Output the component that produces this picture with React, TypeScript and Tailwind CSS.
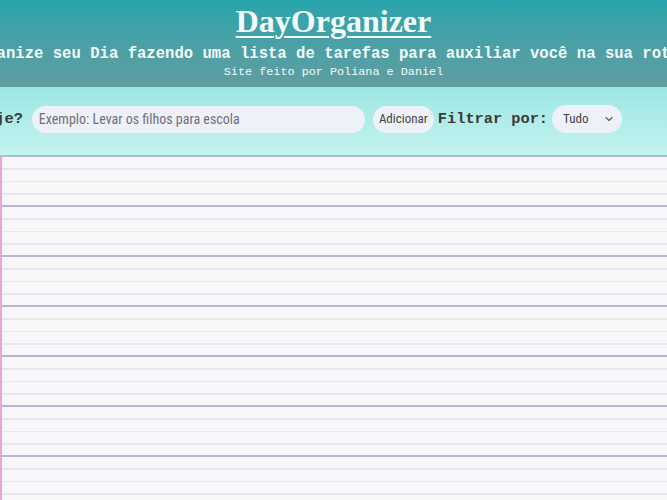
import React, { useState } from 'react';

const narrow = { fontFamily: '"Liberation Sans Narrow", "Roboto Condensed", Roboto, sans-serif' };

const Header: React.FC = () => (
  <header className="h-[87px] bg-gradient-to-b from-[#27a4ad] to-[#5f9da0] flex flex-col items-center overflow-hidden text-[#f3fbfb]">
    <h1 className="mt-[2px] text-[32px] leading-[38px] font-bold underline decoration-2 underline-offset-[4px] font-['Liberation_Serif',serif]">
      DayOrganizer
    </h1>
    <div className="w-full flex justify-center">
      <p className="shrink-0 whitespace-nowrap mt-[5px] text-[15.6px] leading-[19px] font-bold font-['Liberation_Mono',monospace]">
        Organize seu Dia fazendo uma lista de tarefas para auxiliar você na sua rotina
      </p>
    </div>
    <p className="mt-[1px] text-[11.8px] leading-[14px] font-['Liberation_Mono',monospace]">Site feito por Poliana e Daniel</p>
  </header>
);

const TaskForm: React.FC = () => {
  const [task, setTask] = useState('');
  const [filter, setFilter] = useState('tudo');

  return (
    <section className="h-[68px] shrink-0 bg-gradient-to-b from-[#9de6e4] to-[#c3f3ef] flex items-center justify-end pr-[45px] pb-[4px] overflow-hidden">
      <label className="shrink-0 whitespace-nowrap text-[15.3px] font-bold text-[#3a3a3a] font-['Liberation_Mono',monospace]">
        O que vamos fazer hoje?
      </label>
      <input
        value={task}
        onChange={e => setTask(e.target.value)}
        placeholder="Exemplo: Levar os filhos para escola"
        style={narrow}
        className="shrink-0 ml-[9px] w-[333px] h-[27px] rounded-full bg-[#eef2f8] px-[7px] text-[14px] text-[#444] placeholder:text-[#6f6f78] outline-none"
      />
      <button
        style={narrow}
        className="shrink-0 ml-[8px] w-[61px] h-[27px] rounded-full bg-[#eef2f8] text-[13px] text-[#444]"
      >
        Adicionar
      </button>
      <span className="shrink-0 ml-[4px] whitespace-nowrap text-[15.3px] font-bold text-[#3a3a3a] font-['Liberation_Mono',monospace]">
        Filtrar por:
      </span>
      <div className="shrink-0 ml-[4px] relative w-[70px] h-[28px]">
        <select
          value={filter}
          onChange={e => setFilter(e.target.value)}
          style={narrow}
          className="appearance-none w-full h-full rounded-full bg-[#eef2f8] pl-[11px] text-[13px] text-[#444] outline-none"
        >
          <option value="tudo">Tudo</option>
          <option value="feitos">Feitos</option>
          <option value="pendentes">Pendentes</option>
        </select>
        <svg className="absolute right-[9px] top-[11px] w-[8px] h-[6px] pointer-events-none" viewBox="0 0 8 6" fill="none">
          <path d="M1 1.5 L4 4.5 L7 1.5" stroke="#666" strokeWidth="1.2" strokeLinecap="round" strokeLinejoin="round" />
        </svg>
      </div>
    </section>
  );
};

const PaperBlock: React.FC = () => (
  <div className="h-[50px] shrink-0 border-t-[2px] border-[#b1b9d1] flex flex-col">
    <div className="h-[11px] shrink-0" />
    <div className="h-[1.5px] shrink-0 bg-[#e5e6ee]" />
    <div className="h-[11px] shrink-0" />
    <div className="h-[1.5px] shrink-0 bg-[#e5e6ee]" />
    <div className="h-[11px] shrink-0" />
    <div className="h-[1.5px] shrink-0 bg-[#e5e6ee]" />
  </div>
);

const Paper: React.FC = () => (
  <main className="flex-1 bg-[#f8f6f9] border-l-[2px] border-[#e8a6d2] flex flex-col overflow-hidden">
    {Array.from({ length: 8 }).map((_, i) => (
      <PaperBlock key={i} />
    ))}
  </main>
);

export default function App() {
  return (
    <div className="w-[667px] h-[500px] overflow-hidden flex flex-col bg-[#f8f6f9]">
      <Header />
      <TaskForm />
      <Paper />
    </div>
  );
}
